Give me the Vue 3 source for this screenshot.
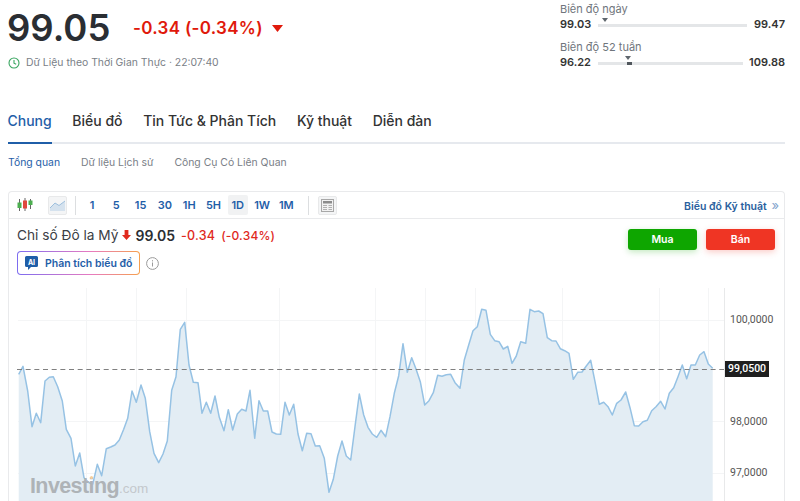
<template>
  <div class="page">
    <header class="top">
      <div class="quote">
        <div class="price-row">
          <span class="price">99.05</span>
          <span class="change">-0.34 (-0.34%)</span>
          <svg class="caret" width="11" height="7" viewBox="0 0 11 7"><path d="M0 0h11L5.5 7z" fill="#e0190b" /></svg>
        </div>
        <div class="live">
          <svg width="12" height="12" viewBox="0 0 12 12" fill="none" stroke="#3aa661" stroke-width="1.1">
            <circle cx="6" cy="6" r="5" />
            <path d="M6 3v3.2l2.2 1" />
          </svg>
          <span>Dữ Liệu theo Thời Gian Thực · 22:07:40</span>
        </div>
      </div>
      <div class="ranges">
        <div v-for="r in ranges" :key="r.label" class="range">
          <div class="range-label">{{ r.label }}</div>
          <div class="range-row">
            <b class="range-low">{{ r.low }}</b>
            <div class="track" :style="{ width: r.width + 'px' }">
              <i class="pointer" :style="{ left: r.pos + 'px' }"></i>
              <i v-if="r.seg" class="seg" :style="{ left: r.pos + 'px', width: r.seg + 'px' }"></i>
            </div>
            <b class="range-high">{{ r.high }}</b>
          </div>
        </div>
      </div>
    </header>

    <nav class="tabs">
      <a v-for="(t, i) in tabs" :key="t" :class="['tab', { active: i === 0 }]">{{ t }}</a>
    </nav>
    <nav class="subtabs">
      <a v-for="(t, i) in subtabs" :key="t" :class="['subtab', { active: i === 0 }]">{{ t }}</a>
    </nav>

    <section class="card">
      <div class="toolbar">
        <svg class="candles" width="16" height="16" viewBox="0 0 16 16">
          <path d="M2.500 2v12M8 1v13M13.500 2v10" stroke="#666" stroke-width="1" />
          <rect x="0.500" y="5.500" width="4" height="5.500" fill="#4caf50" />
          <rect x="6" y="3.500" width="4" height="8" fill="#e0483e" />
          <rect x="11.500" y="3.500" width="4" height="4.500" fill="#4caf50" />
        </svg>
        <div class="tool-box area-tool">
          <svg width="16" height="12" viewBox="0 0 16 12">
            <path d="M0 9l5-5 4 2.500L15 2v10H0z" fill="#d5e2ee" />
            <path d="M0 9l5-5 4 2.500L15 2" fill="none" stroke="#9dbfdd" stroke-width="1" />
          </svg>
        </div>
        <span class="divider"></span>
        <div class="intervals">
          <button v-for="iv in intervals" :key="iv" :class="['interval', { on: iv === '1D' }]">{{ iv }}</button>
        </div>
        <span class="divider second"></span>
        <div class="tool-box layout-tool">
          <svg width="13" height="13" viewBox="0 0 13 13">
            <rect x="0.500" y="0.500" width="12" height="12" fill="#f2f2f2" stroke="#a8a8a8" />
            <rect x="2" y="2" width="9" height="2.500" fill="#8c8c8c" />
            <path d="M2 6.500h4M2 8.500h4M2 10.500h4M7.500 6.500h3.500M7.500 8.500h3.500M7.500 10.500h3.500" stroke="#b0b0b0" stroke-width="1" />
          </svg>
        </div>
        <a class="tech-link">Biểu đồ Kỹ thuật <span class="chev">»</span></a>
      </div>

      <div class="chart-head">
        <div class="head-left">
          <div class="title-row">
            <span class="name">Chỉ số Đô la Mỹ</span>
            <svg width="9" height="10" viewBox="0 0 9 10"><path d="M2.600 0h3.800v5H9L4.500 10 0 5h2.600z" fill="#e0291d" /></svg>
            <b class="head-price">99.05</b>
            <span class="head-change first">-0.34</span>
            <span class="head-change">(-0.34%)</span>
          </div>
          <div class="ai-row">
            <button class="ai-btn">
              <svg width="13" height="14" viewBox="0 0 13 14">
                <path d="M1.500 0h10A1.500 1.500 0 0 1 13 1.500v8A1.500 1.500 0 0 1 11.500 11H6l-3 3v-3H1.500A1.500 1.500 0 0 1 0 9.500v-8A1.500 1.500 0 0 1 1.500 0z" fill="#1f5ea8" />
                <text x="6.500" y="8.500" class="ai-mark">AI</text>
              </svg>
              <span>Phân tích biểu đồ</span>
            </button>
            <svg width="13" height="13" viewBox="0 0 13 13" fill="none" stroke="#9a9a9a">
              <circle cx="6.500" cy="6.500" r="5.900" />
              <path d="M6.500 5.500v4M6.500 3.200v1.200" />
            </svg>
          </div>
        </div>
        <div class="trade">
          <button class="buy">Mua</button>
          <button class="sell">Bán</button>
        </div>
      </div>

      <div class="chart">
        <svg class="plot" width="775" height="213" viewBox="9 288 775 213">
          <path v-for="x in gridX" :key="x" :d="`M${x} 288V501`" stroke="#f4f5f6" stroke-width="1" />
          <path v-for="y in gridY" :key="y" :d="`M18 ${y}H725`" stroke="#f4f5f6" stroke-width="1" />
          <polygon :points="areaPoints" fill="#e3edf4" />
          <polyline :points="linePoints" fill="none" stroke="#96c2e4" stroke-width="1.500" stroke-linejoin="round" />
          <path d="M17 369.500H725" stroke="#808080" stroke-width="1" stroke-dasharray="5 3.670" />
          <path d="M724.500 288V501" stroke="#e8e9ea" stroke-width="1" />
          <text v-for="l in axis" :key="l.v" x="730" :y="l.y" class="axis">{{ l.v }}</text>
        </svg>
        <div class="last-tag">99,0500</div>
        <div class="watermark"><i class="dot"></i>Investing<span>.com</span></div>
      </div>
    </section>
  </div>
</template>

<script setup>
const ranges = [
  { label: 'Biên độ ngày', low: '99.03', high: '99.47', width: 149, pos: 6, seg: 0 },
  { label: 'Biên độ 52 tuần', low: '96.22', high: '109.88', width: 145, pos: 29, seg: 5 }
]
const tabs = ['Chung', 'Biểu đồ', 'Tin Tức & Phân Tích', 'Kỹ thuật', 'Diễn đàn']
const subtabs = ['Tổng quan', 'Dữ liệu Lịch sử', 'Công Cụ Có Liên Quan']
const intervals = ['1', '5', '15', '30', '1H', '5H', '1D', '1W', '1M']
const gridX = [86.500, 136.500, 186.500, 279.500, 375.500, 425.500, 475.500, 562.500, 659.500, 708.500]
const gridY = [320.500, 421.500, 473.500]
const axis = [
  { v: '100,0000', y: 323 },
  { v: '98,0000', y: 425 },
  { v: '97,0000', y: 476 }
]

// traced from the reference, x and y in 3x crop coordinates per crop
const left = [[56,268],[69,244],[83,318],[96,425],[109,385],[122,413],[135,288],[148,277],[160,275],[173,305],[187,348],[199,433],[213,460],[226,543],[239,504],[252,578],[265,592],[278,598],[292,538],[305,572],[319,491],[332,486],[345,480],[358,465],[371,433],[383,400],[396,318],[409,352],[423,300],[436,340],[449,440],[462,505],[476,533],[489,507],[502,468],[515,316],[528,275],[541,133],[554,112],[567,240],[580,292],[594,293],[606,385],[619,352],[632,385],[645,333],[658,397],[672,437],[685,374],[698,435],[712,387],[725,373],[738,378],[750,316],[764,460],[777,347],[790,378],[803,378]]
const middle = [[36,441],[49,447],[62,448],[75,352],[88,390],[101,358],[114,447],[127,497],[140,445],[153,446],[166,483],[179,482],[193,520],[207,622],[220,583],[233,513],[246,468],[259,513],[272,525],[285,425],[298,327],[311,390],[324,427],[337,447],[350,457],[363,436],[377,455],[390,395],[403,325],[416,272],[429,176],[442,262],[455,218],[468,252],[481,290],[494,360],[507,347],[520,323],[533,271],[546,274],[559,269],[572,268],[585,293],[600,310],[613,225],[626,180],[639,137],[652,125],[665,73],[678,76],[691,148],[704,167],[717,170],[730,192],[743,184],[756,235],[769,213],[782,170],[797,175]]
const right = [[0,73],[13,80],[26,78],[39,86],[52,158],[65,167],[78,168],[91,191],[104,197],[117,205],[130,283],[143,262],[156,261],[169,243],[182,226],[195,290],[208,358],[221,352],[234,365],[247,390],[260,355],[273,345],[287,321],[300,368],[313,422],[326,423],[339,410],[352,406],[365,377],[378,365],[392,349],[405,372],[418,325],[431,308],[444,275],[457,240],[470,281],[483,240],[496,240],[509,210],[522,200],[535,237],[548,250]]

const toPage = (list, dx) => list.map(([x, y]) => `${(x / 3 + dx).toFixed(1)},${(y / 3 + 285).toFixed(1)}`)
const line = [...toPage(left, 0), ...toPage(middle, 260), ...toPage(right, 530)]
const linePoints = line.join(' ')
const areaPoints = `18.7,501 ${linePoints} 712.7,501`
</script>

<style>
html, body {
  margin: 0;
  background: #fff;
  overflow: hidden;
}
</style>

<style scoped>
.page {
  box-sizing: border-box;
  width: 800px;
  height: 501px;
  padding: 0 15px 0 8px;
  overflow: hidden;
  font-family: Inter, "Noto Sans", sans-serif;
  color: #333;
}

.top {
  display: flex;
  justify-content: space-between;
  height: 110px;
}

.price-row {
  display: flex;
  align-items: center;
  height: 56px;
}

.price {
  margin-left: -1px;
  font-size: 36.500px;
  font-weight: 600;
  color: #2a2e33;
  width: 126px;
}

.change {
  font-size: 17px;
  font-weight: 600;
  color: #e0190b;
  letter-spacing: 0.300px;
}

.caret {
  margin-left: 9px;
}

.live {
  display: flex;
  align-items: center;
  gap: 6px;
  font-size: 10.400px;
  color: #7a8087;
}

.ranges {
  width: 225px;
  padding-top: 2px;
}

.range {
  margin-bottom: 8px;
}

.range-label {
  font-size: 11px;
  line-height: 14px;
  color: #6f757c;
}

.range-row {
  display: flex;
  align-items: center;
  justify-content: space-between;
  height: 16px;
  font-size: 11px;
  color: #333;
}

.range-row b {
  font-weight: 600;
}

.track {
  position: relative;
  top: 1px;
  height: 3px;
  background: #e4e6e8;
}

.pointer {
  position: absolute;
  top: -6px;
  margin-left: -2px;
  border-left: 3px solid transparent;
  border-right: 3px solid transparent;
  border-top: 4px solid #5f666d;
}

.seg {
  position: absolute;
  top: 0;
  height: 3px;
  background: #50565c;
}

.tabs {
  display: flex;
  gap: 20.600px;
  height: 32px;
  margin-left: -0.500px;
  border-bottom: 2px solid #e6e9ee;
}

.tab {
  font-size: 14px;
  font-weight: 500;
  line-height: 22px;
  color: #333;
}

.tab.active {
  color: #1f5ea8;
  height: 32px;
  border-bottom: 2px solid #1f5ea8;
}

.subtabs {
  display: flex;
  gap: 21px;
  height: 36px;
  align-items: center;
  margin-bottom: 11px;
}

.subtab {
  font-size: 10.400px;
  color: #7a8087;
}

.subtab.active {
  color: #1f5ea8;
}

.card {
  border: 1px solid #e9eaec;
  border-bottom: 0;
  border-radius: 4px 4px 0 0;
  height: 320px;
}

.toolbar {
  display: flex;
  align-items: center;
  height: 26px;
  padding-left: 8px;
  border-bottom: 1px solid #e9eaec;
}

.tool-box {
  display: flex;
  align-items: center;
  justify-content: center;
  width: 19px;
  height: 19px;
  background: #f4f5f6;
  border: 1px solid #e8e9ea;
  box-sizing: border-box;
  border-radius: 2px;
}

.area-tool {
  margin-left: 15px;
}

.divider {
  width: 1px;
  height: 19px;
  background: #dcdee0;
  margin: 0 6px 0 8px;
}

.divider.second {
  margin: 0 9px 0 12px;
}

.intervals {
  display: flex;
  gap: 4.300px;
}

.interval {
  width: 20px;
  height: 20px;
  padding: 0;
  border: 0;
  border-radius: 2px;
  background: none;
  font-family: inherit;
  font-size: 11px;
  font-weight: 600;
  color: #1f5ea8;
}

.interval.on {
  background: #f1f2f3;
}

.tech-link {
  margin-left: auto;
  padding-right: 5px;
  font-size: 10.500px;
  font-weight: 600;
  color: #2a5f9e;
}

.chev {
  font-size: 13px;
  font-weight: 400;
  color: #7fa3cc;
  margin-left: 2px;
}

.chart-head {
  display: flex;
  justify-content: space-between;
  height: 69px;
  padding: 0 9px 0 8px;
}

.title-row {
  display: flex;
  align-items: center;
  height: 32px;
  gap: 4px;
}

.name {
  font-size: 13.700px;
  color: #3c4045;
}

.head-price {
  font-size: 14px;
  font-weight: 600;
  color: #2a2e33;
}

.head-change {
  margin-left: 2px;
  font-size: 12px;
  font-weight: 500;
  letter-spacing: 0.200px;
  color: #e0291d;
}

.head-change.first {
  font-size: 12.500px;
}

.ai-row {
  display: flex;
  align-items: center;
  gap: 6px;
}

.ai-btn {
  display: flex;
  align-items: center;
  gap: 7px;
  box-sizing: border-box;
  width: 123px;
  height: 24px;
  padding: 0 0 0 7px;
  border: 1px solid transparent;
  border-radius: 4px;
  background:
    linear-gradient(#fff, #fff) padding-box,
    linear-gradient(90deg, #7d6cf0, #e77bc0 60%, #f6a04d) border-box;
  font-family: inherit;
  font-size: 10.500px;
  font-weight: 600;
  color: #1f5ea8;
}

.ai-mark {
  font-size: 7px;
  font-weight: 700;
  fill: #fff;
  text-anchor: middle;
}

.trade {
  display: flex;
  gap: 9px;
  padding-top: 10px;
}

.trade button {
  width: 69px;
  height: 21px;
  padding: 0;
  border: 0;
  border-radius: 3px;
  font-family: inherit;
  font-size: 10.500px;
  font-weight: 600;
  color: #fff;
}

.buy {
  background: #0ea600;
  box-shadow: 0 2px 6px rgba(14, 166, 0, 0.25);
}

.sell {
  background: #ef3524;
  box-shadow: 0 2px 6px rgba(239, 53, 36, 0.25);
}

.chart {
  position: relative;
  height: 213px;
}

.plot {
  display: block;
}

.axis {
  font-family: Roboto, sans-serif;
  font-size: 10.500px;
  fill: #555;
}

.last-tag {
  position: absolute;
  left: 716px;
  top: 73px;
  width: 44px;
  height: 16px;
  background: #1f1f1f;
  font-family: Roboto, sans-serif;
  font-size: 10.500px;
  font-weight: 500;
  line-height: 16px;
  text-align: center;
  color: #fff;
}

.watermark {
  position: absolute;
  left: 21px;
  top: 184px;
  font-family: "Liberation Sans", sans-serif;
  font-size: 21.500px;
  font-weight: 700;
  letter-spacing: -0.600px;
  line-height: 28px;
  color: #aeb3b7;
}

.watermark span {
  font-size: 13.500px;
  font-weight: 400;
  letter-spacing: 0;
  color: #c3c8cc;
}

.dot {
  position: absolute;
  left: 60px;
  top: 4px;
  width: 3px;
  height: 3px;
  border-radius: 50%;
  background: #f7cf9a;
}
</style>
